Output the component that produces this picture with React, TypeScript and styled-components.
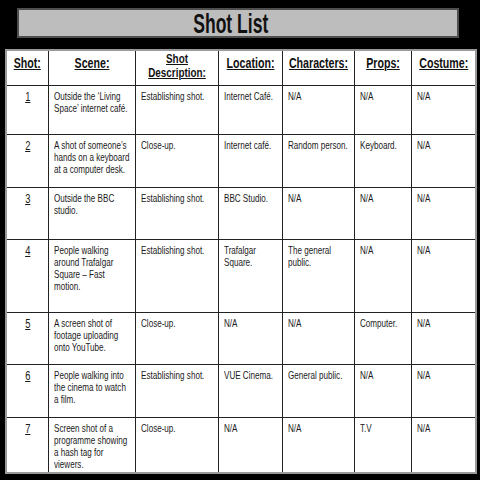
import { FC, ReactNode } from 'react';
import styled, { createGlobalStyle } from 'styled-components';

interface IShot {
  shot: string;
  scene: string;
  description: string;
  location: string;
  characters: string;
  props: string;
  costume: string;
  height: number;
}

const shots: IShot[] = [
  { shot: '1', scene: 'Outside the ‘Living Space’ internet café.', description: 'Establishing shot.', location: 'Internet Café.', characters: 'N/A', props: 'N/A', costume: 'N/A', height: 49 },
  { shot: '2', scene: 'A shot of someone’s hands on a keyboard at a computer desk.', description: 'Close-up.', location: 'Internet café.', characters: 'Random person.', props: 'Keyboard.', costume: 'N/A', height: 53 },
  { shot: '3', scene: 'Outside the BBC studio.', description: 'Establishing shot.', location: 'BBC Studio.', characters: 'N/A', props: 'N/A', costume: 'N/A', height: 52 },
  { shot: '4', scene: 'People walking around Trafalgar Square – Fast motion.', description: 'Establishing shot.', location: 'Trafalgar Square.', characters: 'The general public.', props: 'N/A', costume: 'N/A', height: 73 },
  { shot: '5', scene: 'A screen shot of footage uploading onto YouTube.', description: 'Close-up.', location: 'N/A', characters: 'N/A', props: 'Computer.', costume: 'N/A', height: 52 },
  { shot: '6', scene: 'People walking into the cinema to watch a film.', description: 'Establishing shot.', location: 'VUE Cinema.', characters: 'General public.', props: 'N/A', costume: 'N/A', height: 53 },
  { shot: '7', scene: 'Screen shot of a programme showing a hash tag for viewers.', description: 'Close-up.', location: 'N/A', characters: 'N/A', props: 'T.V', costume: 'N/A', height: 56 },
];

const columns = [42, 87, 83, 64, 72, 57, 65];

// the source is a squeezed slide, so all text is narrowed horizontally
const Narrow: FC<{ scale: number; children: ReactNode }> = ({ scale, children }) => (
  <SNarrow $scale={scale}>{children}</SNarrow>
);

const App: FC = () => (
  <>
    <GlobalStyle />
    <SPage>
      <STitleBar>
        <STitle>Shot List</STitle>
      </STitleBar>
      <STable>
        <colgroup>
          {columns.map((w, i) => (
            <col key={i} style={{ width: w }} />
          ))}
        </colgroup>
        <thead>
          <tr>
            {['Shot:', 'Scene:'].map((h) => (
              <SHead key={h}>
                <Narrow scale={0.76}>{h}</Narrow>
              </SHead>
            ))}
            <SHead small>
              <Narrow scale={0.76}>
                Shot
                <br />
                Description:
              </Narrow>
            </SHead>
            {['Location:', 'Characters:', 'Props:', 'Costume:'].map((h) => (
              <SHead key={h}>
                <Narrow scale={0.76}>{h}</Narrow>
              </SHead>
            ))}
          </tr>
        </thead>
        <tbody>
          {shots.map((s) => (
            <tr key={s.shot} style={{ height: s.height }}>
              <SNumber>
                <Narrow scale={0.78}>{s.shot}</Narrow>
              </SNumber>
              {[s.scene, s.description, s.location, s.characters, s.props, s.costume].map((t, i) => (
                <SCell key={i}>
                  <Narrow scale={0.77}>{t}</Narrow>
                </SCell>
              ))}
            </tr>
          ))}
        </tbody>
      </STable>
    </SPage>
  </>
);

export default App;

const GlobalStyle = createGlobalStyle`
  html, body {
    margin: 0;
    background: #000;
  }
`;

const SPage = styled.div`
  width: 480px;
  height: 480px;
  box-sizing: border-box;
  padding: 8px 5px 0 5px;
  display: flex;
  flex-direction: column;
  align-items: flex-start;
  font-family: 'Liberation Sans', Arial, sans-serif;
`;

const STitleBar = styled.div`
  align-self: stretch;
  margin: 0 16px 0 12px;
  height: 30px;
  box-sizing: border-box;
  background: #bdbdbd;
  border: 2px solid #4e4e4e;
  display: flex;
  align-items: center;
  justify-content: center;
  overflow: hidden;
`;

const STitle = styled.span`
  display: inline-block;
  font-size: 27px;
  line-height: 26px;
  font-weight: bold;
  color: #111;
  transform: scaleX(0.65);
  margin: 1px 14px 0 0;
`;

const SNarrow = styled.div<{ $scale: number }>`
  width: ${({ $scale }) => 100 / $scale}%;
  transform: scaleX(${({ $scale }) => $scale});
  transform-origin: 0 0;
`;

const STable = styled.table`
  margin-top: 11px;
  width: 470px;
  table-layout: fixed;
  border-collapse: collapse;
  background: #fff;
  border: 2px solid #9a9a9a;
`;

const SHead = styled.th<{ small?: boolean }>`
  height: 35px;
  box-sizing: border-box;
  border: 1.5px solid #222;
  padding: ${({ small }) => (small ? '1px 2px' : '4px 2px')};
  vertical-align: top;
  text-align: center;
  font-size: ${({ small }) => (small ? '13px' : '14px')};
  line-height: ${({ small }) => (small ? '14px' : '16px')};
  font-weight: bold;
  text-decoration: underline;
  color: #111;
  overflow: hidden;
`;

const SCell = styled.td`
  border: 1.5px solid #222;
  padding: 4px 4px 2px 5px;
  vertical-align: top;
  font-size: 10.5px;
  line-height: 12px;
  color: #1a1a1a;
  overflow: hidden;
`;

const SNumber = styled(SCell)`
  text-align: center;
  text-decoration: underline;
  font-size: 12px;
  padding-top: 5px;
`;
